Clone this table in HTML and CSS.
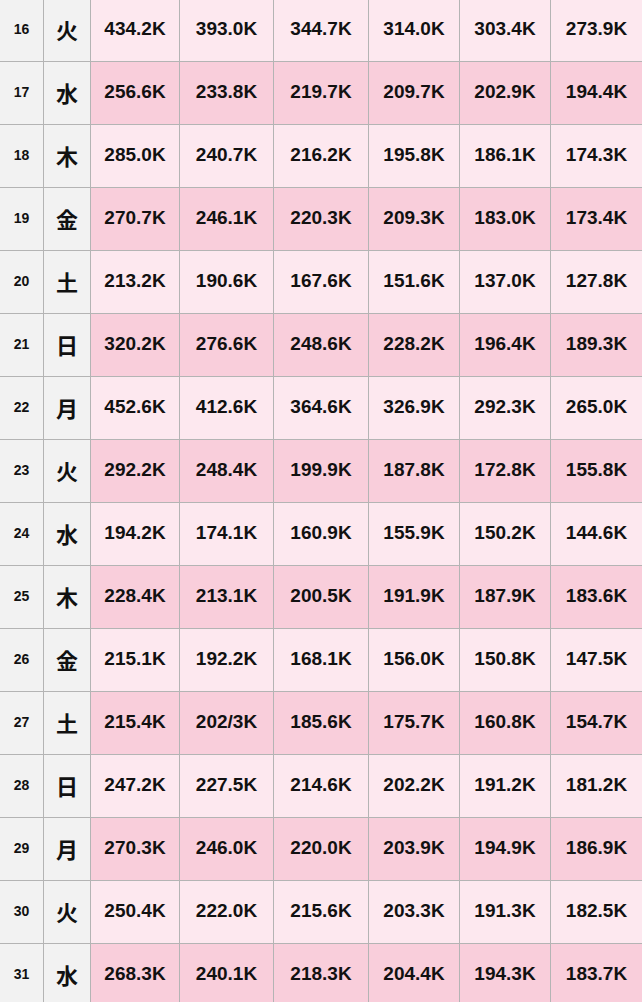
FILE: index.html
```html
<!DOCTYPE html>
<html lang="ja">
<head>
<meta charset="utf-8">
<link rel="stylesheet" href="styles.css">
</head>
<body>
<div class="sheet">
  <div class="row light"><div class="d">16</div><div class="w">火</div><div class="v">434.2K</div><div class="v">393.0K</div><div class="v">344.7K</div><div class="v">314.0K</div><div class="v">303.4K</div><div class="v">273.9K</div></div>
  <div class="row dark"><div class="d">17</div><div class="w">水</div><div class="v">256.6K</div><div class="v">233.8K</div><div class="v">219.7K</div><div class="v">209.7K</div><div class="v">202.9K</div><div class="v">194.4K</div></div>
  <div class="row light"><div class="d">18</div><div class="w">木</div><div class="v">285.0K</div><div class="v">240.7K</div><div class="v">216.2K</div><div class="v">195.8K</div><div class="v">186.1K</div><div class="v">174.3K</div></div>
  <div class="row dark"><div class="d">19</div><div class="w">金</div><div class="v">270.7K</div><div class="v">246.1K</div><div class="v">220.3K</div><div class="v">209.3K</div><div class="v">183.0K</div><div class="v">173.4K</div></div>
  <div class="row light"><div class="d">20</div><div class="w">土</div><div class="v">213.2K</div><div class="v">190.6K</div><div class="v">167.6K</div><div class="v">151.6K</div><div class="v">137.0K</div><div class="v">127.8K</div></div>
  <div class="row dark"><div class="d">21</div><div class="w">日</div><div class="v">320.2K</div><div class="v">276.6K</div><div class="v">248.6K</div><div class="v">228.2K</div><div class="v">196.4K</div><div class="v">189.3K</div></div>
  <div class="row light"><div class="d">22</div><div class="w">月</div><div class="v">452.6K</div><div class="v">412.6K</div><div class="v">364.6K</div><div class="v">326.9K</div><div class="v">292.3K</div><div class="v">265.0K</div></div>
  <div class="row dark"><div class="d">23</div><div class="w">火</div><div class="v">292.2K</div><div class="v">248.4K</div><div class="v">199.9K</div><div class="v">187.8K</div><div class="v">172.8K</div><div class="v">155.8K</div></div>
  <div class="row light"><div class="d">24</div><div class="w">水</div><div class="v">194.2K</div><div class="v">174.1K</div><div class="v">160.9K</div><div class="v">155.9K</div><div class="v">150.2K</div><div class="v">144.6K</div></div>
  <div class="row dark"><div class="d">25</div><div class="w">木</div><div class="v">228.4K</div><div class="v">213.1K</div><div class="v">200.5K</div><div class="v">191.9K</div><div class="v">187.9K</div><div class="v">183.6K</div></div>
  <div class="row light"><div class="d">26</div><div class="w">金</div><div class="v">215.1K</div><div class="v">192.2K</div><div class="v">168.1K</div><div class="v">156.0K</div><div class="v">150.8K</div><div class="v">147.5K</div></div>
  <div class="row dark"><div class="d">27</div><div class="w">土</div><div class="v">215.4K</div><div class="v">202/3K</div><div class="v">185.6K</div><div class="v">175.7K</div><div class="v">160.8K</div><div class="v">154.7K</div></div>
  <div class="row light"><div class="d">28</div><div class="w">日</div><div class="v">247.2K</div><div class="v">227.5K</div><div class="v">214.6K</div><div class="v">202.2K</div><div class="v">191.2K</div><div class="v">181.2K</div></div>
  <div class="row dark"><div class="d">29</div><div class="w">月</div><div class="v">270.3K</div><div class="v">246.0K</div><div class="v">220.0K</div><div class="v">203.9K</div><div class="v">194.9K</div><div class="v">186.9K</div></div>
  <div class="row light"><div class="d">30</div><div class="w">火</div><div class="v">250.4K</div><div class="v">222.0K</div><div class="v">215.6K</div><div class="v">203.3K</div><div class="v">191.3K</div><div class="v">182.5K</div></div>
  <div class="row dark"><div class="d">31</div><div class="w">水</div><div class="v">268.3K</div><div class="v">240.1K</div><div class="v">218.3K</div><div class="v">204.4K</div><div class="v">194.3K</div><div class="v">183.7K</div></div>
</div>
</body>
</html>
```

FILE: styles.css
```css
html, body {
  margin: 0;
  padding: 0;
  background: #ffffff;
}
body {
  font-family: "Liberation Sans", Arial, "Noto Sans CJK JP", sans-serif;
  color: #111111;
  overflow: hidden;
}
.sheet {
  display: flex;
  flex-direction: column;
  gap: 1px;
  margin-top: -1px;
  background: #b4b4b4;
  width: 642px;
}
.row {
  display: grid;
  grid-template-columns: 43px 46px 88px 93px 94px 90px 90px 91px;
  column-gap: 1px;
  height: 62px;
}
.row > div {
  display: flex;
  align-items: center;
  justify-content: center;
  font-weight: bold;
  padding-bottom: 3px;
}
.d {
  background: #f2f2f2;
  font-size: 14px;
}
.w {
  background: #f2f2f2;
  font-family: "Noto Sans CJK JP", sans-serif;
  font-size: 22px;
}
.v {
  font-size: 19px;
}
.light .v {
  background: #fde8ef;
}
.dark .v {
  background: #f9cedb;
}
```
